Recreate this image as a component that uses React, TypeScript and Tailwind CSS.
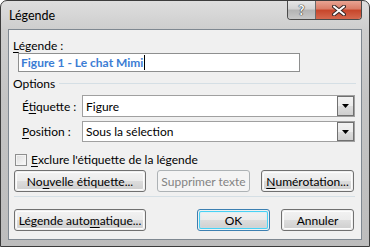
import React from "react";

const FONT = { fontFamily: 'Lato, "Liberation Sans", sans-serif' };

function Btn({ children, w, disabled, primary }: { children: React.ReactNode; w: string; disabled?: boolean; primary?: boolean }) {
  if (disabled) {
    return (
      <div className={`${w} h-[22px] rounded-[3px] border border-[#adb2b5] bg-[#f4f4f4] flex items-center justify-center text-[#838383] whitespace-nowrap`}>
        {children}
      </div>
    );
  }
  return (
    <div
      className={`${w} h-[22px] rounded-[3px] border ${primary ? "border-[#3c7fb1]" : "border-[#707070]"} p-px`}
    >
      <div
        className={`h-full rounded-[2px] flex items-center justify-center text-black whitespace-nowrap bg-[linear-gradient(#f2f2f2_0%,#ebebeb_50%,#dddddd_50%,#cfcfcf_100%)] ${
          primary ? "shadow-[inset_0_0_0_1px_#48d2f5,inset_0_0_2px_1px_#bfe9f8]" : "shadow-[inset_0_0_0_1px_#fcfcfc]"
        }`}
      >
        {children}
      </div>
    </div>
  );
}

function Combo({ value, h }: { value: string; h: string }) {
  return (
    <div className={`w-[273px] ${h} border border-[#a0a0a0] bg-white flex items-center`}>
      <span className="flex-1 pl-[3px]">{value}</span>
      <div className="w-[17px] h-full border border-[#707070] bg-[linear-gradient(#f2f2f2_0%,#ebebeb_50%,#dddddd_50%,#cfcfcf_100%)] flex items-center justify-center">
        <svg width="7" height="4" viewBox="0 0 7 4">
          <path d="M0 0h7L3.5 4z" fill="#000" />
        </svg>
      </div>
    </div>
  );
}

const U = ({ c }: { c: string }) => <span className="underline underline-offset-2">{c}</span>;

export default function App() {
  return (
    <div
      style={FONT}
      className="relative w-[370px] h-[247px] rounded-t-[7px] border border-[#3c3c3c] bg-[linear-gradient(180deg,#dedede_0%,#cdcdcd_12%,#c4c4c4_40%,#bdbdbd_100%)] text-[12px] leading-[15px] text-black flex flex-col overflow-hidden"
    >
      {/* title bar */}
      <div className="h-[28px] flex items-center pl-[8px] shrink-0">
        <span className="text-[12.5px] text-black">Légende</span>
      </div>

      <div className="absolute top-0 right-[7px] flex h-[19px] rounded-b-[4px] border border-t-0 border-[#4a4a4a] overflow-hidden">
        <div className="w-[28px] h-full bg-[linear-gradient(#e6e6e6_0%,#d2d2d2_45%,#b3b3b3_50%,#c8c8c8_100%)] border-r border-[#6a6a6a] flex items-center justify-center">
          <span className="text-[13px] font-bold text-white leading-none [text-shadow:0_0_1px_#333,0_0_1px_#333,0_0_1px_#333]">?</span>
        </div>
        <div className="w-[45px] h-full bg-[linear-gradient(#e8a493_0%,#d97c66_45%,#c7452a_50%,#d5694f_100%)] flex items-center justify-center">
          <svg width="14" height="11" viewBox="0 0 14 11">
            <path d="M2 1.5l10 8M12 1.5l-10 8" stroke="#3a2a28" strokeWidth="4" strokeLinecap="round" />
            <path d="M2 1.5l10 8M12 1.5l-10 8" stroke="#fff" strokeWidth="2" strokeLinecap="round" />
          </svg>
        </div>
      </div>

      {/* client area */}
      <div className="ml-[7px] w-[354px] h-[211px] border border-[#7f8891] bg-[#f0f0f0] flex flex-col shrink-0">
        <div className="mt-[8px] h-[15px] pl-[4px]">
          <U c="L" />égende :
        </div>
        <div className="ml-[9px] w-[282px] h-[19px] border border-[#8e8f8f] bg-white flex items-center pl-[2px]">
          <span className="text-[#3c7dd4] font-bold">Figure 1 - Le chat Mimi</span>
          <span className="ml-px w-px h-[15px] bg-black" />
        </div>

        <div className="mt-[4px] h-[14px] pl-[4px] pr-[5px] flex items-center gap-[4px]">
          <span>Options</span>
          <div className="flex-1 h-px bg-[#d5dfe5]" />
        </div>

        <div className="mt-[5px] h-[22px] flex items-center">
          <span className="ml-[13px] w-[60px]">
            É<U c="t" />iquette :
          </span>
          <Combo value="Figure" h="h-[22px]" />
        </div>
        <div className="mt-[4px] h-[21px] flex items-center">
          <span className="ml-[13px] w-[60px]">
            <U c="P" />osition :
          </span>
          <Combo value="Sous la sélection" h="h-[21px]" />
        </div>

        <div className="mt-[11px] h-[13px] flex items-center">
          <div className="ml-[6px] w-[12px] h-[12px] border border-[#8e8f8f] bg-[linear-gradient(135deg,#dcdcdc,#fbfbfb)] shadow-[inset_0_0_0_1px_#f4f4f4]" />
          <span className="ml-[4px]">
            <U c="E" />xclure l'étiquette de la légende
          </span>
        </div>

        <div className="mt-[4px] ml-[5px] flex gap-[11px]">
          <Btn w="w-[132px]">
            No<U c="u" />velle étiquette...
          </Btn>
          <Btn w="w-[93px]" disabled>
            Supprimer texte
          </Btn>
          <Btn w="w-[93px]">
            <U c="N" />umérotation...
          </Btn>
        </div>

        <div className="mt-[4px] ml-[5px] w-[341px] h-px bg-[#d5dfe5]" />

        <div className="mt-[12px] ml-[5px] flex">
          <Btn w="w-[132px]">
            Légende auto<U c="m" />atique...
          </Btn>
          <div className="ml-[51px]">
            <Btn w="w-[73px]" primary>
              OK
            </Btn>
          </div>
          <div className="ml-[11px]">
            <Btn w="w-[73px]">Annuler</Btn>
          </div>
        </div>
      </div>
    </div>
  );
}
